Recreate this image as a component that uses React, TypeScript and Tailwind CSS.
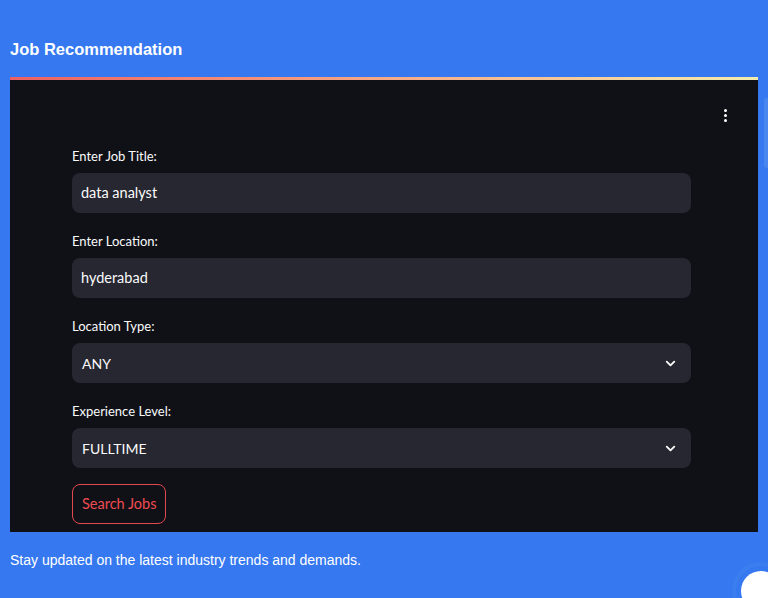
import { ChevronDown } from "lucide-react";

const sans = { fontFamily: "Lato, 'Noto Sans', sans-serif" };

function Field({ label, value, select }: { label: string; value: string; select?: boolean }) {
  return (
    <div className="flex flex-col">
      <label className="text-[13px] text-[#fafafa] leading-[16px] mb-[9px]" style={sans}>
        {label}
      </label>
      <div className="h-[40px] rounded-[8px] bg-[#262730] flex items-center justify-between pl-[9px] pr-[13px]">
        <span className={`text-[#fafafa] ${select ? "text-[14px] pl-[1px]" : "text-[14.5px]"}`} style={sans}>
          {value}
        </span>
        {select && <ChevronDown size={15} strokeWidth={3} className="text-[#fafafa]" />}
      </div>
    </div>
  );
}

export default function App() {
  return (
    <div className="relative min-h-[598px] bg-[#3578f0] px-[10px] overflow-hidden">
      <h1
        className="pt-[39px] text-[16.5px] font-bold text-white leading-[20px]"
        style={{ fontFamily: "'Liberation Sans', Arial, sans-serif" }}
      >
        Job Recommendation
      </h1>

      <div className="mt-[18px]">
        <div className="h-[3px] bg-gradient-to-r from-[#ec5f62] to-[#f3ecae]" />
        <div className="relative bg-[#0f1117] pl-[62px] pr-[67px] pt-[68px] pb-[8px]">
          <div className="absolute right-[31px] top-[29px] flex flex-col gap-[2px]">
            <span className="w-[3px] h-[3px] rounded-full bg-white" />
            <span className="w-[3px] h-[3px] rounded-full bg-white" />
            <span className="w-[3px] h-[3px] rounded-full bg-white" />
          </div>

          <div className="flex flex-col gap-[20px]">
            <Field label="Enter Job Title:" value="data analyst" />
            <Field label="Enter Location:" value="hyderabad" />
            <Field label="Location Type:" value="ANY" select />
            <Field label="Experience Level:" value="FULLTIME" select />
          </div>

          <button
            className="mt-[16px] h-[40px] px-[9px] rounded-[8px] border border-[#e0494f] text-[#f04b51] text-[14.5px] bg-transparent"
            style={sans}
          >
            Search Jobs
          </button>
        </div>
      </div>

      <p
        className="mt-[19px] text-[14px] text-white leading-[18px]"
        style={{ fontFamily: "'Liberation Sans', Arial, sans-serif" }}
      >
        Stay updated on the latest industry trends and demands.
      </p>

      <div className="absolute right-0 top-[98px] w-[4px] h-[70px] rounded-l-[3px] bg-[#4a86f0]" />
      <div className="absolute -right-[22px] -bottom-[22px] w-[58px] h-[58px] rounded-full border-[4px] border-[#3a7ef0] bg-transparent flex items-center justify-center">
        <div className="w-[40px] h-[40px] rounded-full bg-white" />
      </div>
    </div>
  );
}
